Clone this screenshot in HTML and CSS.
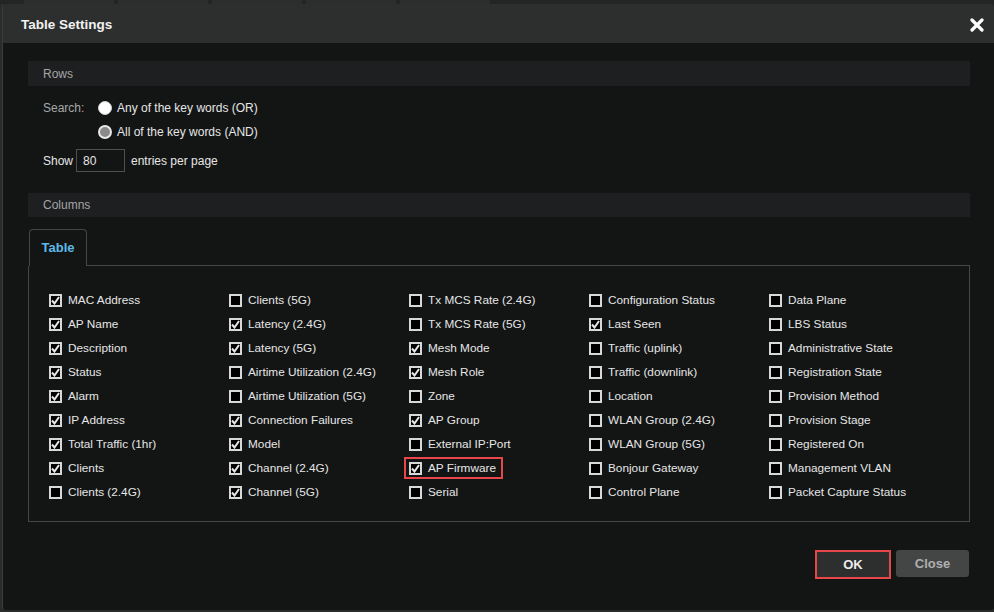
FILE: index.html
```html
<!DOCTYPE html>
<html>
<head>
<meta charset="utf-8">
<link rel="stylesheet" href="styles.css">
</head>
<body>
<div class="backdrop-strip">
  <span></span><span></span><span></span><span></span><span></span>
</div>
<div class="modal">
  <div class="modal-header">
    <div class="title">Table Settings</div>
    <div class="close-x">
      <svg width="14" height="14" viewBox="0 0 14 14"><path d="M2 2 L12 12 M12 2 L2 12" stroke="#fff" stroke-width="3.2" stroke-linecap="round"/></svg>
    </div>
  </div>
  <div class="modal-body">
    <div class="section-bar">Rows</div>
    <div class="rows-area">
      <div class="search-row">
        <span class="label">Search:</span>
        <div class="radio-list">
          <label class="radio-item"><span class="radio"></span>Any of the key words (OR)</label>
          <label class="radio-item"><span class="radio selected"></span>All of the key words (AND)</label>
        </div>
      </div>
      <div class="show-row">
        <span class="label">Show</span>
        <span class="input">80</span>
        <span>entries per page</span>
      </div>
    </div>
    <div class="section-bar cols-bar">Columns</div>
    <div class="tabs">
      <div class="tab">Table</div>
      <div class="tab-line"></div>
    </div>
    <div class="panel">
      <div class="grid">
        <label class="cb-item"><span class="cb on"></span>MAC Address</label>
        <label class="cb-item"><span class="cb"></span>Clients (5G)</label>
        <label class="cb-item"><span class="cb"></span>Tx MCS Rate (2.4G)</label>
        <label class="cb-item"><span class="cb"></span>Configuration Status</label>
        <label class="cb-item"><span class="cb"></span>Data Plane</label>

        <label class="cb-item"><span class="cb on"></span>AP Name</label>
        <label class="cb-item"><span class="cb on"></span>Latency (2.4G)</label>
        <label class="cb-item"><span class="cb"></span>Tx MCS Rate (5G)</label>
        <label class="cb-item"><span class="cb on"></span>Last Seen</label>
        <label class="cb-item"><span class="cb"></span>LBS Status</label>

        <label class="cb-item"><span class="cb on"></span>Description</label>
        <label class="cb-item"><span class="cb on"></span>Latency (5G)</label>
        <label class="cb-item"><span class="cb on"></span>Mesh Mode</label>
        <label class="cb-item"><span class="cb"></span>Traffic (uplink)</label>
        <label class="cb-item"><span class="cb"></span>Administrative State</label>

        <label class="cb-item"><span class="cb on"></span>Status</label>
        <label class="cb-item"><span class="cb"></span>Airtime Utilization (2.4G)</label>
        <label class="cb-item"><span class="cb on"></span>Mesh Role</label>
        <label class="cb-item"><span class="cb"></span>Traffic (downlink)</label>
        <label class="cb-item"><span class="cb"></span>Registration State</label>

        <label class="cb-item"><span class="cb on"></span>Alarm</label>
        <label class="cb-item"><span class="cb"></span>Airtime Utilization (5G)</label>
        <label class="cb-item"><span class="cb"></span>Zone</label>
        <label class="cb-item"><span class="cb"></span>Location</label>
        <label class="cb-item"><span class="cb"></span>Provision Method</label>

        <label class="cb-item"><span class="cb on"></span>IP Address</label>
        <label class="cb-item"><span class="cb on"></span>Connection Failures</label>
        <label class="cb-item"><span class="cb on"></span>AP Group</label>
        <label class="cb-item"><span class="cb"></span>WLAN Group (2.4G)</label>
        <label class="cb-item"><span class="cb"></span>Provision Stage</label>

        <label class="cb-item"><span class="cb on"></span>Total Traffic (1hr)</label>
        <label class="cb-item"><span class="cb on"></span>Model</label>
        <label class="cb-item"><span class="cb"></span>External IP:Port</label>
        <label class="cb-item"><span class="cb"></span>WLAN Group (5G)</label>
        <label class="cb-item"><span class="cb"></span>Registered On</label>

        <label class="cb-item"><span class="cb on"></span>Clients</label>
        <label class="cb-item"><span class="cb on"></span>Channel (2.4G)</label>
        <label class="cb-item"><span class="highlight"><span class="cb on"></span>AP Firmware</span></label>
        <label class="cb-item"><span class="cb"></span>Bonjour Gateway</label>
        <label class="cb-item"><span class="cb"></span>Management VLAN</label>

        <label class="cb-item"><span class="cb"></span>Clients (2.4G)</label>
        <label class="cb-item"><span class="cb on"></span>Channel (5G)</label>
        <label class="cb-item"><span class="cb"></span>Serial</label>
        <label class="cb-item"><span class="cb"></span>Control Plane</label>
        <label class="cb-item"><span class="cb"></span>Packet Capture Status</label>
      </div>
    </div>
    <div class="footer">
      <button class="btn btn-ok">OK</button>
      <button class="btn btn-close">Close</button>
    </div>
  </div>
</div>
</body>
</html>
```
FILE: styles.css
```css
html, body {
  margin: 0;
  padding: 0;
}
body {
  width: 994px;
  height: 612px;
  overflow: hidden;
  background: #2a2c2c;
  font-family: "Liberation Sans", Arial, sans-serif;
  font-size: 12px;
  color: #e6e6e6;
}
.backdrop-strip {
  height: 4px;
  display: flex;
  gap: 4px;
  padding-left: 24px;
  background: #232525;
}
.backdrop-strip span {
  width: 90px;
  background: #2c2e2e;
}
.modal {
  margin-left: 2px;
  width: 992px;
  height: 606px;
  background: #131515;
  border-radius: 3px;
  border-left: 1px solid #3a3c3c;
  box-sizing: border-box;
  display: flex;
  flex-direction: column;
  overflow: hidden;
}
.modal-header {
  height: 39px;
  background: #2d2f2f;
  display: flex;
  align-items: center;
  justify-content: space-between;
  padding: 0 10px 0 18px;
  flex-shrink: 0;
}
.title {
  font-weight: bold;
  font-size: 13.5px;
  color: #f2f2f2;
  padding-top: 2px;
}
.close-x {
  display: flex;
  align-items: center;
  margin-top: 2px;
}
.modal-body {
  padding: 18px 24px 0 25px;
  display: flex;
  flex-direction: column;
}
.section-bar {
  height: 25px;
  background: #1e1f21;
  color: #a5a5a5;
  display: flex;
  align-items: center;
  padding-left: 15px;
  font-size: 12px;
}
.rows-area {
  padding: 10px 0 0 15px;
  display: flex;
  flex-direction: column;
}
.label {
  color: #a8a8a8;
}
.search-row {
  display: flex;
}
.search-row .label {
  line-height: 24px;
  width: 55px;
}
.radio-list {
  display: flex;
  flex-direction: column;
}
.radio-item {
  display: flex;
  align-items: center;
  height: 24px;
  gap: 5px;
  color: #e6e6e6;
}
.radio {
  width: 14px;
  height: 14px;
  border-radius: 50%;
  background: #fff;
  box-sizing: border-box;
  border: 1px solid #cfcfcf;
}
.radio.selected {
  background: #8a8a8a;
  border: 2px solid #e8e8e8;
}
.show-row {
  display: flex;
  align-items: center;
  margin-top: 5px;
  height: 23px;
}
.show-row .label {
  color: #e6e6e6;
  width: 33px;
}
.input {
  width: 49px;
  height: 23px;
  box-sizing: border-box;
  border: 1px solid #4e5050;
  background: #131515;
  padding-left: 6px;
  display: flex;
  align-items: center;
  margin-right: 6px;
}
.cols-bar {
  margin-top: 21px;
  height: 24px;
}
.tabs {
  margin-top: 12px;
  display: flex;
  align-items: flex-end;
  height: 37px;
}
.tab {
  width: 58px;
  height: 37px;
  box-sizing: border-box;
  border: 1px solid #444646;
  border-bottom: none;
  border-radius: 4px 4px 0 0;
  color: #5fb8e6;
  font-weight: bold;
  font-size: 13px;
  display: flex;
  align-items: center;
  justify-content: center;
  margin-left: 1px;
  padding-bottom: 2px;
}
.tab-line {
  flex: 1;
  border-bottom: 1px solid #444646;
}
.panel {
  width: 942px;
  height: 256px;
  box-sizing: border-box;
  border: 1px solid #444646;
  border-top: none;
  padding: 22px 0 0 20px;
}
.grid {
  display: grid;
  grid-template-columns: repeat(5, 180px);
  grid-auto-rows: 24px;
}
.cb-item {
  display: flex;
  align-items: center;
  color: #e6e6e6;
  white-space: nowrap;
  font-size: 11.8px;
}
.cb {
  width: 13px;
  height: 13px;
  box-sizing: border-box;
  border: 2px solid #d8d8d8;
  background: #000;
  margin-right: 6px;
  flex-shrink: 0;
}
.cb.on {
  background: #000 url("data:image/svg+xml;utf8,<svg xmlns='http://www.w3.org/2000/svg' width='9' height='9' viewBox='0 0 9 9'><path d='M1 4.5 L3.5 7.5 L8 1' fill='none' stroke='%23e8e8e8' stroke-width='2'/></svg>") center/9px 9px no-repeat;
}
.highlight {
  display: flex;
  align-items: center;
  border: 2px solid #e8474a;
  height: 22px;
  box-sizing: border-box;
  padding: 0 5px 0 3px;
  margin-left: -5px;
}
.footer {
  display: flex;
  justify-content: flex-end;
  align-items: flex-start;
  gap: 5px;
  margin-top: 28px;
  padding-right: 1px;
}
.btn {
  font-family: "Liberation Sans", Arial, sans-serif;
  font-weight: bold;
  font-size: 13px;
  border-radius: 3px;
  cursor: pointer;
}
.btn-ok {
  width: 76px;
  height: 29px;
  background: #2d2f2f;
  color: #ececec;
  border: 2px solid #e8474a;
  border-radius: 0;
}
.btn-close {
  width: 73px;
  height: 27px;
  background: #444646;
  color: #b0b0b0;
  border: none;
}
```
